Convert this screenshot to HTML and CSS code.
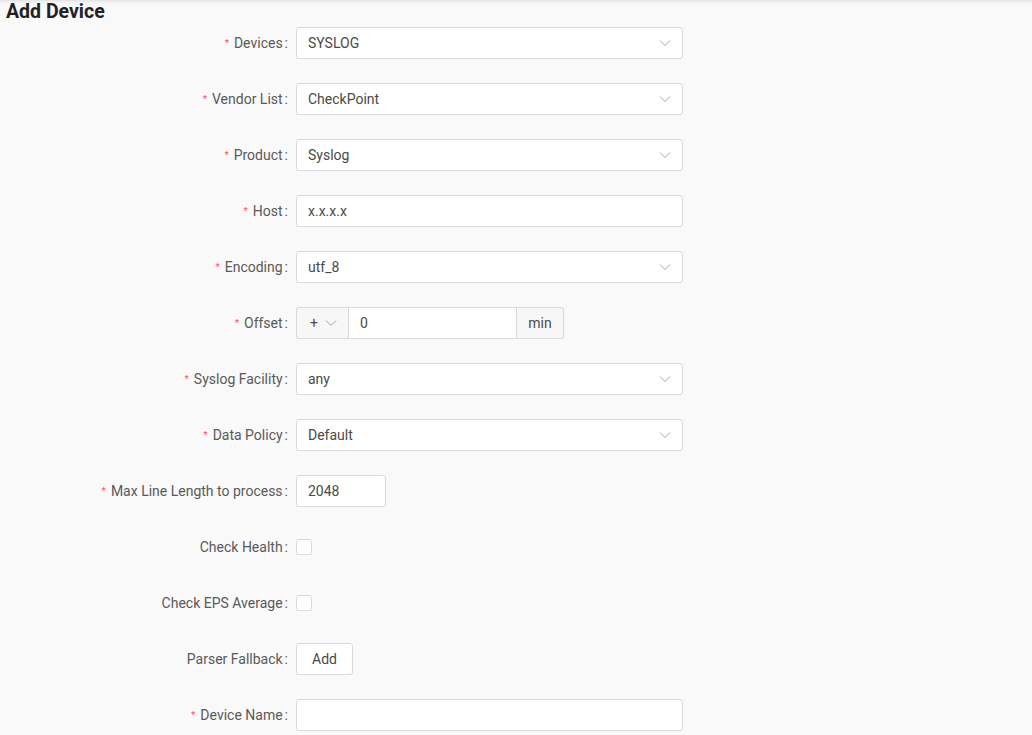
FILE: index.html
```
<!doctype html>
<html lang="en">
<head>
	<meta charset="utf-8">
	<title>Add Device</title>
	<link rel="stylesheet" href="styles.css">
</head>
<body>
	<svg xmlns="http://www.w3.org/2000/svg" style="display:none">
		<symbol id="arrow-down" viewBox="0 0 12 12">
			<path d="M1 3.5 L6 8.5 L11 3.5" fill="none" stroke="currentColor" stroke-width="1"></path>
		</symbol>
	</svg>
	<main class="page">
		<h1 class="title">Add Device</h1>
		<form class="form">
			<div class="row">
				<label class="label required">Devices</label>
				<div class="select"><span>SYSLOG</span><svg class="arrow"><use href="#arrow-down"></use></svg></div>
			</div>
			<div class="row">
				<label class="label required">Vendor List</label>
				<div class="select"><span>CheckPoint</span><svg class="arrow"><use href="#arrow-down"></use></svg></div>
			</div>
			<div class="row">
				<label class="label required">Product</label>
				<div class="select"><span>Syslog</span><svg class="arrow"><use href="#arrow-down"></use></svg></div>
			</div>
			<div class="row">
				<label class="label required">Host</label>
				<input class="input" type="text" value="x.x.x.x">
			</div>
			<div class="row">
				<label class="label required">Encoding</label>
				<div class="select"><span>utf_8</span><svg class="arrow"><use href="#arrow-down"></use></svg></div>
			</div>
			<div class="row">
				<label class="label required">Offset</label>
				<div class="group">
					<div class="addon sign">+ <svg class="arrow"><use href="#arrow-down"></use></svg></div>
					<input class="group-input" type="text" value="0">
					<div class="addon unit">min</div>
				</div>
			</div>
			<div class="row">
				<label class="label required">Syslog Facility</label>
				<div class="select"><span>any</span><svg class="arrow"><use href="#arrow-down"></use></svg></div>
			</div>
			<div class="row">
				<label class="label required">Data Policy</label>
				<div class="select"><span>Default</span><svg class="arrow"><use href="#arrow-down"></use></svg></div>
			</div>
			<div class="row">
				<label class="label required">Max Line Length to process</label>
				<input class="input small" type="text" value="2048">
			</div>
			<div class="row">
				<label class="label">Check Health</label>
				<span class="checkbox"></span>
			</div>
			<div class="row">
				<label class="label">Check EPS Average</label>
				<span class="checkbox"></span>
			</div>
			<div class="row">
				<label class="label">Parser Fallback</label>
				<button class="button" type="button">Add</button>
			</div>
			<div class="row">
				<label class="label required">Device Name</label>
				<input class="input" type="text" value="">
			</div>
		</form>
	</main>
</body>
</html>
```

FILE: styles.css
```
* {
	box-sizing: border-box;
	font-family: Roboto, "Liberation Sans", sans-serif;
}
html, body {
	margin: 0;
	padding: 0;
	background-color: #f9f9f9;
	color: #595959;
}
.page {
	min-height: 735px;
	box-shadow: inset 0 4px 4px -3px rgba(0, 0, 0, 0.12);
}
.title {
	margin: 0;
	padding: 1px 6px 0;
	height: 27px;
	font-size: 19.5px;
	font-weight: 700;
	color: #222222;
	line-height: 22px;
}
.form {
	display: flex;
	flex-direction: column;
	gap: 24px;
}
.row {
	display: grid;
	grid-template-columns: 296px 1fr;
	align-items: center;
	height: 32px;
}
.label {
	justify-self: end;
	padding-right: 8px;
	font-size: 14px;
	color: #595959;
}
.label::after {
	content: ":";
	margin-left: 2px;
}
.required::before {
	content: "*";
	display: inline-block;
	margin-right: 5px;
	color: #ff4d4f;
	font-size: 11px;
	font-family: "Liberation Sans", sans-serif;
	vertical-align: 1px;
}
.select, .input {
	width: 387px;
	height: 32px;
	padding: 4px 11px;
	border: 1px solid #d9d9d9;
	border-radius: 3px;
	background-color: #ffffff;
	font-size: 14px;
	color: #4a4a4a;
}
.select {
	display: flex;
	align-items: center;
	justify-content: space-between;
}
.input {
	outline: none;
}
.input.small {
	width: 90px;
}
.arrow {
	width: 12px;
	height: 12px;
	color: #a6a6a6;
}
.group {
	display: flex;
	width: 268px;
	height: 32px;
}
.addon {
	display: flex;
	align-items: center;
	height: 32px;
	border: 1px solid #d9d9d9;
	background-color: #f7f7f7;
	font-size: 14px;
	color: #4a4a4a;
}
.sign {
	width: 52px;
	padding-left: 13px;
	gap: 7px;
	border-radius: 3px 0 0 3px;
	border-right: none;
}
.group-input {
	width: 169px;
	height: 32px;
	padding: 4px 11px;
	border: 1px solid #d9d9d9;
	background-color: #ffffff;
	font-size: 14px;
	color: #4a4a4a;
	outline: none;
}
.unit {
	width: 47px;
	justify-content: center;
	border-left: none;
	border-radius: 0 3px 3px 0;
}
.checkbox {
	width: 16px;
	height: 16px;
	border: 1px solid #d9d9d9;
	border-radius: 3px;
	background-color: #ffffff;
}
.button {
	width: 57px;
	height: 32px;
	border: 1px solid #d9d9d9;
	border-radius: 3px;
	background-color: #ffffff;
	font-size: 14px;
	color: #4a4a4a;
}
```
